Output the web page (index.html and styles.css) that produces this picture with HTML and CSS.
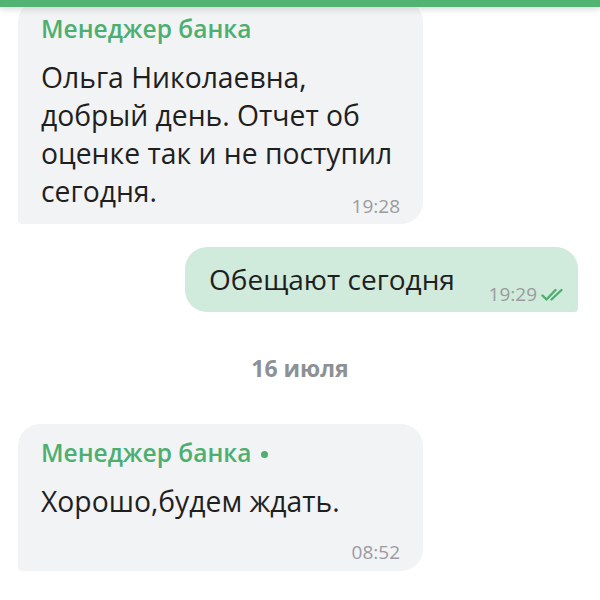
FILE: index.html
```html
<!DOCTYPE html>
<html lang="ru">
<head>
<meta charset="utf-8">
<title>Чат</title>
<link rel="stylesheet" href="styles.css">
</head>
<body>
<div class="topbar"></div>
<main class="chat">
  <div class="msg in first">
    <div class="author">Менеджер банка</div>
    <div class="body">Ольга Николаевна, добрый день. Отчет об оценке так и не поступил сегодня.<span class="time">19:28</span></div>
  </div>

  <div class="msg out">
    <div class="text">Обещают сегодня</div>
    <div class="meta">
      <span class="time">19:29</span>
      <svg class="checks" width="26" height="14" viewBox="0 0 26 14" aria-hidden="true">
        <path d="M1.5 7.5 L5.5 11.5 L14.5 2" fill="none" stroke="#4caf6f" stroke-width="2.4" stroke-linecap="round" stroke-linejoin="round"/>
        <path d="M10.5 11.5 L20.5 2" fill="none" stroke="#4caf6f" stroke-width="2.4" stroke-linecap="round"/>
      </svg>
    </div>
  </div>

  <div class="date">16 июля</div>

  <div class="msg in">
    <div class="author">Менеджер банка <span class="online"></span></div>
    <div class="body">Хорошо,будем ждать.</div>
    <div class="time own-line">08:52</div>
  </div>
</main>
</body>
</html>
```
FILE: styles.css
```css
html, body {
  margin: 0;
  padding: 0;
  background: #ffffff;
}

body {
  width: 600px;
  height: 600px;
  overflow: hidden;
  font-family: "Open Sans", "Noto Sans", sans-serif;
  color: #1f1f1f;
}

.topbar {
  position: fixed;
  top: 0;
  left: 0;
  right: 0;
  height: 7px;
  background: #52b473;
  box-shadow: 0 2px 7px rgba(0, 0, 0, 0.16);
  z-index: 2;
}

.chat {
  display: flex;
  flex-direction: column;
  padding: 0 22px 0 18px;
}

.msg {
  box-sizing: border-box;
  background: #f2f3f5;
}

.msg.in {
  align-self: flex-start;
  width: 405px;
  border-radius: 22px 22px 22px 4px;
  padding: 13px 23px 7px 23px;
}

.msg.out {
  align-self: flex-end;
  margin-top: 23px;
  width: 393px;
  display: flex;
  align-items: flex-start;
  background: #d0eadb;
  border-radius: 22px 22px 4px 22px;
  padding: 13px 11px 7px 24px;
}

.author {
  font-size: 24.5px;
  line-height: 32px;
  font-weight: 600;
  color: #4caf6f;
  display: flex;
  align-items: center;
}

.online {
  display: inline-block;
  width: 7px;
  height: 7px;
  border-radius: 50%;
  background: #4caf6f;
  margin-left: 10px;
  margin-top: 3px;
}

.body {
  display: flow-root;
  margin-top: 13px;
  font-size: 28.3px;
  line-height: 38px;
}

.body .time {
  float: right;
  margin-top: 23px;
  margin-left: 12px;
}

.time {
  font-size: 19px;
  line-height: 22px;
  color: #9a9c9f;
}

.time.own-line {
  text-align: right;
  margin-top: 21px;
  margin-bottom: 1px;
}

.text {
  font-size: 28px;
  line-height: 38px;
  flex: 1;
}

.meta {
  display: flex;
  align-items: center;
  gap: 4px;
  margin-top: 23px;
}

.checks {
  display: block;
  margin-top: 2px;
}

.date {
  align-self: center;
  margin: 41px 0;
  font-size: 23px;
  line-height: 30px;
  font-weight: 700;
  color: #8d9195;
  padding-left: 4px;
}
```
